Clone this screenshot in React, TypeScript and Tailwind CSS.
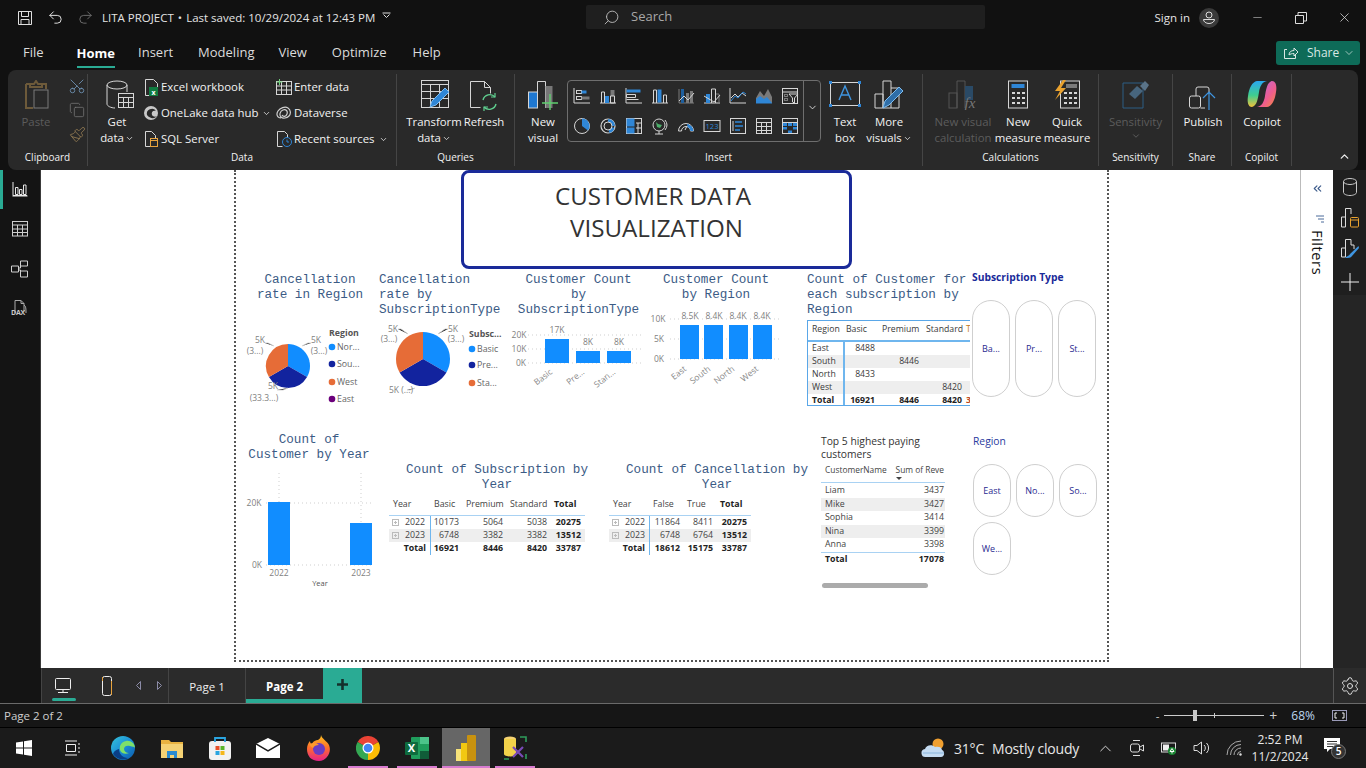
/**
 * Power BI Desktop window with the customer data report open on Page 2.
 */

import React from 'react';
import { ChevronDown, ChevronUp, ChevronsLeft, Copy, Minus, Paintbrush, Redo2, Scissors, Search, Settings, Undo2, X } from 'lucide-react';

const W = '#d6d6d6';
const B = '#2f86d6';
const G = '#7a7a7a';
const BLUE = '#118dff';
const NAVY = '#12239e';
const ORANGE = '#e66c37';

type SvgProps = { w?: number; h?: number; vb?: string; children: React.ReactNode; className?: string };

const S = ({ w = 18, h = 18, vb, children, className }: SvgProps) => (
  <svg width={w} height={h} viewBox={vb ?? `0 0 ${w} ${h}`} fill="none" className={`shrink-0 ${className ?? ''}`}>
    {children}
  </svg>
);

const GALLERY: React.ReactNode[] = [
  <><path d="M1 1v15h16" stroke={W} /><rect x="3.5" y="3.5" width="5" height="3" stroke={W} /><rect x="8.5" y="3.5" width="5" height="3" fill={B} /><rect x="3.5" y="9.5" width="5" height="3" stroke={W} /><rect x="8.5" y="9.5" width="8" height="3" fill={G} /></>,
  <><path d="M1 16h16" stroke={W} /><path d="M2.5 16V5h3v11" stroke={W} /><rect x="6" y="9" width="4" height="7" fill={B} /><rect x="11.5" y="3" width="4" height="6" fill={G} /><path d="M11.5 9h4v7h-4z" stroke={W} /></>,
  <><path d="M1 1v15h16" stroke={W} /><rect x="1.5" y="2.5" width="14" height="3" fill={B} /><path d="M1.5 7.5h9v3h-9zM1.5 12.5h12" stroke={W} /></>,
  <><path d="M1 16h16" stroke={W} /><path d="M2.5 16V3h3v13" stroke={W} /><rect x="6.5" y="2.5" width="4" height="13" fill={B} /><path d="M12.5 16V8h3v8" stroke={W} /></>,
  <><path d="M2 2v14h15" stroke={G} /><rect x="4" y="2" width="3" height="14" fill="#1e5f9e" /><rect x="9" y="6" width="3" height="10" fill={G} /><rect x="13" y="4" width="3" height="12" fill={G} /><path d="M2 14l5-5 4 4 6-7" stroke={W} /></>,
  <><path d="M1 16h16" stroke={W} /><rect x="3" y="7" width="4" height="9" fill={B} /><path d="M8.5 16V2h4v14" stroke={W} /><path d="M13 7h3v9" stroke={G} /><path d="M1 9l5 3 5 3 6-7" stroke={W} /></>,
  <><path d="M1 1v15h16" stroke={W} /><path d="M2 11l4-4 3 3 4-4 4 3" stroke={W} /><path d="M2 14l4-5 3 2 5-6 3 2" stroke={B} /></>,
  <><path d="M1 16h16" stroke={B} /><path d="M1 16V11l4-7 4 5 4-7 4 8v6z" fill={G} /><path d="M1 16v-4l4-3 4 3 3-2 5 6z" fill={B} /></>,
  <><rect x="1.5" y="1.5" width="15" height="15" stroke={W} /><path d="M1.5 5h15" stroke={W} /><rect x="3.5" y="7.5" width="3" height="2" stroke={G} /><rect x="3.5" y="11.5" width="3" height="2" stroke={G} /><path d="M8 7h9l-3.5 4v5l-2-1v-4z" fill="#262626" stroke={W} /></>,
  <><circle cx="9" cy="9" r="7.5" stroke={W} /><path d="M9 9V1.5A7.5 7.5 0 0 1 15 13.5z" fill={B} /></>,
  <><circle cx="9" cy="9" r="7" stroke={W} strokeWidth="1.2" /><path d="M9 2a7 7 0 0 1 7 7h-3a4 4 0 0 0-4-4z" fill={B} /><path d="M15.5 11a7 7 0 0 1-5 5l-1-3a4 4 0 0 0 3-3z" fill={B} /><circle cx="9" cy="9" r="4" stroke={W} /></>,
  <><rect x="1.5" y="1.5" width="15" height="15" stroke={W} /><rect x="1.5" y="1.5" width="8" height="8" fill={B} /><rect x="1.5" y="10.5" width="8" height="6" fill={B} /><path d="M11 6h5M11 11h5M13 6v10" stroke={W} /></>,
  <><circle cx="8" cy="8" r="6" stroke={W} /><path d="M5 5l2 2 4 1-2 3-3-1z" fill="#4caf6a" /><path d="M8 14v3M4 17h8" stroke={W} /><path d="M14 3a8 8 0 0 1 0 10" stroke={W} /></>,
  <><path d="M1.5 14a7.5 7.5 0 0 1 15 0h-3a4.5 4.5 0 0 0-9 0z" stroke={W} /><path d="M10 7a7.5 7.5 0 0 1 6.5 7h-3a4.5 4.5 0 0 0-3-4z" fill={B} /><path d="M8 13l2-4" stroke={W} /></>,
  <><rect x="1" y="3.5" width="16" height="11" stroke={W} /><text x="9" y="12" textAnchor="middle" fontSize="7.5" fill={B}>123</text></>,
  <><rect x="1.5" y="1.5" width="15" height="15" stroke={W} /><path d="M4 4v10" stroke={W} /><path d="M6 5h7M6 9h8M6 13h5" stroke={B} strokeWidth="1.6" /></>,
  <><rect x="1.5" y="1.5" width="15" height="15" stroke={W} /><path d="M1.5 5.5h15M1.5 9.5h15M1.5 13.5h15M6.5 5.5v11M11.5 5.5v11" stroke={W} /></>,
  <><rect x="1.5" y="1.5" width="15" height="15" stroke={W} /><path d="M1.5 5.5h15" stroke={W} /><rect x="2" y="6" width="4" height="3" fill={B} /><rect x="7" y="6" width="4" height="3" fill={B} /><rect x="12" y="6" width="4" height="3" fill={B} /><rect x="2" y="10" width="4" height="2.5" fill={B} /><rect x="7" y="13.5" width="4" height="2.5" fill={B} /><rect x="12" y="10" width="4" height="2.5" fill={B} /></>,
];

const BigBtn = ({ w, icon, lines, dim, chevron }: { w: number; icon: React.ReactNode; lines: string[]; dim?: boolean; chevron?: boolean }) => (
  <div className="flex flex-col items-center" style={{ width: w }}>
    <div className="h-[32px] flex items-start justify-center">{icon}</div>
    <div className={`mt-[2px] text-[11.4px] leading-[16px] text-center whitespace-nowrap ${dim ? 'text-[#5c5c5c]' : 'text-[#f2f2f2]'}`}>
      {lines.map((l, i) => (
        <div key={l} className="flex items-center justify-center gap-px">
          {l}
          {chevron && i === lines.length - 1 && <ChevronDown size={9} strokeWidth={2} />}
        </div>
      ))}
    </div>
  </div>
);

const Group = ({ w, label, children }: { w: number; label: string; children: React.ReactNode }) => (
  <div className="relative flex flex-col border-r border-[#454545] my-[4px] h-[92px]" style={{ width: w }}>
    <div className="flex h-[72px] pt-[6px]">{children}</div>
    <div className="mt-[4px] text-[10px] leading-[14px] text-center text-[#f2f2f2]">{label}</div>
  </div>
);

const SmallBtn = ({ icon, label, chevron }: { icon: React.ReactNode; label: string; chevron?: boolean }) => (
  <div className="h-[26px] flex items-center gap-[2px] text-[11.4px] text-[#f2f2f2] whitespace-nowrap">
    <div className="w-[16px] flex justify-center">{icon}</div>
    {label}
    {chevron && <ChevronDown size={9} strokeWidth={2} className="ml-[2px]" />}
  </div>
);

function TitleBar() {
  return (
    <div className="h-[35px] flex items-center text-[11.5px] text-[#e4e4e4] relative">
      <S w={16} h={16} className="ml-[17px]"><path d="M1.5 1.5h13v13h-13zM4.5 1.5v5h7v-5M4 14.5v-5h8v5" stroke="#e0e0e0" /></S>
      <Undo2 size={17} color="#e0e0e0" strokeWidth={1.4} className="ml-[14px]" />
      <Redo2 size={17} color="#6a6a6a" strokeWidth={1.4} className="ml-[13px]" />
      <span className="ml-[8px]">LITA PROJECT</span>
      <span className="ml-[4px] mr-[4px]">•</span>
      <span>Last saved: 10/29/2024 at 12:43 PM</span>
      <S w={9} h={7} className="ml-[7px] mb-[4px]"><path d="M.5 1h8M1.5 2.5l3 3 3-3" stroke="#ddd" /></S>
      <div className="absolute left-[586px] top-[5px] w-[399px] h-[24px] bg-[#1f1f1f] rounded-[2px] flex items-center text-[#a8a8a8] text-[13px]">
        <Search size={17} strokeWidth={1.3} color="#bbb" className="ml-[17px] -scale-x-100" />
        <span className="ml-[11px]">Search</span>
      </div>
      <div className="ml-auto flex items-center">
        <span className="text-[11.5px] mr-[9px]">Sign in</span>
        <S w={20} h={20} className="mr-[32px]"><circle cx="10" cy="10" r="10" fill="#3a3a3a" /><circle cx="10" cy="7" r="3" stroke="#ddd" /><path d="M4.5 11.5h11a5.5 4 0 0 1-11 0z" stroke="#ddd" /></S>
        <Minus size={13} color="#ddd" strokeWidth={1} className="mr-[31px]" />
        <S w={12} h={12} className="mr-[30px]"><path d="M.5 3.5h8v8h-8zM3 3V.5h8.5V9H9" stroke="#ddd" /></S>
        <X size={15} color="#ddd" strokeWidth={1.2} className="mr-[14px]" />
      </div>
    </div>
  );
}

function MenuBar() {
  const items: [string, string][] = [['Insert', 'ml-[23px]'], ['Modeling', 'ml-[25px]'], ['View', 'ml-[24px]'], ['Optimize', 'ml-[25px]'], ['Help', 'ml-[26px]']];
  return (
    <div className="h-[35px] flex items-center text-[13px] text-[#dcdcdc]">
      <span className="ml-[23px]">File</span>
      <span className="ml-[33px] font-bold text-white relative leading-[20px]">
        Home
        <span className="absolute left-0 right-0 -bottom-[5px] h-[2px] bg-[#2aab94]" />
      </span>
      {items.map(([t, c]) => <span key={t} className={c}>{t}</span>)}
      <div className="ml-auto mr-[6px] w-[84px] h-[24px] rounded-[3px] bg-[#0e6b58] flex items-center text-[12px] text-[#d8e8e4]">
        <S w={16} h={14} className="ml-[7px]"><path d="M4 3.5H1.5v9h11V9M6 9c0-3 2-4.500 5-4.500V2l4 4-4 4V7.500c-2 0-4 .5-5 1.500z" stroke="#d8e8e4" /></S>
        <span className="ml-[8px]">Share</span>
        <ChevronDown size={12} strokeWidth={1.4} className="ml-[4px]" />
      </div>
    </div>
  );
}

function Ribbon() {
  return (
    <div className="h-[100px] mx-[8px] bg-[#292929] rounded-[8px] flex">
      <Group w={80} label="Clipboard">
        <div className="ml-[6px]">
          <BigBtn w={44} dim lines={['Paste']} icon={
            <S w={30} h={32}><path d="M9 4h4l2-3 2 3h4v3H9zM5 4h5M21 4h4v5M5 4v24h7" stroke="#6d5a3a" strokeWidth="2" /><rect x="13" y="10" width="14" height="18" stroke={G} /></S>
          } />
        </div>
        <div className="ml-[10px] flex flex-col items-center -mt-[6px]">
          <div className="h-[26px] flex items-center"><Scissors size={18} color="#6d8fb0" strokeWidth={1.2} className="-rotate-90" /></div>
          <div className="h-[26px] flex items-center"><Copy size={16} color={G} strokeWidth={1.1} /></div>
          <div className="h-[26px] flex items-center"><Paintbrush size={17} color="#8a7550" strokeWidth={1.3} /></div>
        </div>
      </Group>
      <Group w={309} label="Data">
        <div className="ml-[3px]">
          <BigBtn w={52} chevron lines={['Get', 'data']} icon={
            <S className="ml-[5px]" w={28} h={32}><ellipse cx="11" cy="5" rx="10" ry="4" stroke={W} /><path d="M1 5v19c0 2 4 4 8 4M21 5v7" stroke={W} /><rect x="12.500" y="13.500" width="15" height="14" fill="#292929" stroke={W} /><path d="M12.500 17.500h15M12.500 22.500h15M17.500 17.500v10M22.500 17.500v10" stroke={W} /></S>
          } />
        </div>
        <div className="-mt-[6px] w-[130px]">
          <SmallBtn label="Excel workbook" icon={<S w={15} h={17}><path d="M1.500.500h8l4 4v12h-12z" stroke={W} /><rect x="5" y="8" width="9" height="9" fill="#107c41" /><text x="9.500" y="15.500" textAnchor="middle" fontSize="7" fontWeight="700" fill="#fff">x</text></S>} />
          <SmallBtn label="OneLake data hub" chevron icon={<S w={16} h={16}><circle cx="8" cy="8" r="7" fill="#c8c8c8" /><path d="M4 10a5 5 0 0 1 9-4c-3-1-5 1-4 4 1 2 4 2 5 1-2 3-7 3-10-1z" fill="#292929" /></S>} />
          <SmallBtn label="SQL Server" icon={<S w={14} h={16}><path d="M1.500.500h6l4 4v11h-10z" stroke={W} /><rect x="6.500" y="7.500" width="7" height="8" fill="#292929" stroke="#e8a33d" /><path d="M6.500 9.500h7" stroke="#e8a33d" /></S>} />
        </div>
        <div className="-mt-[6px] ml-[3px]">
          <SmallBtn label="Enter data" icon={<S w={16} h={16}><rect x=".5" y="2.500" width="15" height="13" stroke={W} /><path d="M.5 7h15M.5 11h15M5.500 2.500v13M10.500 2.500v13" stroke={W} /><path d="M3.500 0v6M.5 3h6" stroke="#6fcf7b" /></S>} />
          <SmallBtn label="Dataverse" icon={<S w={16} h={14}><path d="M5 12C1 12 0 8 2 5s7-5 10-3 3 6 1 8-6 3-8 1-1-6 2-7 5 1 4 4-4 3-5 1" stroke="#d0d0d0" strokeWidth="1.2" /></S>} />
          <SmallBtn label="Recent sources" chevron icon={<S w={16} h={16}><path d="M1.500.500h7l3 3v3M1.500.500v15h5" stroke={W} /><circle cx="11" cy="11" r="4.500" stroke={B} /><path d="M11 8.500V11h2" stroke={B} /></S>} />
        </div>
      </Group>
      <Group w={118} label="Queries">
        <div className="ml-[10px]">
          <BigBtn w={54} chevron lines={['Transform', 'data']} icon={
            <S w={32} h={30}><rect x="3.500" y=".5" width="27" height="27" stroke={W} /><path d="M3.500 4.500h27M3.500 11.500h27M3.500 18.500h27M12.500 4.500v23M21.500 4.500v23" stroke={W} /><path d="M12 27l2-6L27 8l4 4-13 13z" fill="#2f86d6" stroke="#7fbdf0" /></S>
          } />
        </div>
        <BigBtn w={46} lines={['Refresh']} icon={
          <S w={30} h={32}><path d="M1.500 1.500h14l6 6v6M1.500 1.500v26h10" stroke={W} /><path d="M15.500 1.500v6h6" stroke={W} /><path d="M14 20a7 7 0 0 1 12-3M27 24a7 7 0 0 1-12 3" stroke="#5fcf8f" strokeWidth="1.4" /><path d="M26 13v4h-4M15 31v-4h4" stroke="#5fcf8f" strokeWidth="1.2" /></S>
        } />
      </Group>
      <Group w={408} label="Insert">
        <div className="ml-[6px]">
          <BigBtn w={44} lines={['New', 'visual']} icon={
            <S w={30} h={30}><rect x=".5" y="12" width="9" height="16" fill="#1f78d1" stroke={W} /><path d="M9.500 28V1.500h8V28" stroke={W} /><rect x="17.500" y="6" width="7" height="22" fill="#777" /><path d="M22 14v16M14 23h16" stroke="#5fcf6f" strokeWidth="1.4" /></S>
          } />
        </div>
        <div className="ml-[2px] w-[254px] h-[62px] border border-[#6e6e6e] rounded-[4px] flex">
          <div className="w-[235px] pl-[1px] grid grid-cols-9">
            {GALLERY.map((g, i) => (
              <div key={i} className="h-[30px] flex items-center justify-center"><S>{g}</S></div>
            ))}
          </div>
          <div className="flex-1 border-l border-[#6e6e6e] flex items-center justify-center pb-[8px]">
            <ChevronDown size={11} color="#ddd" strokeWidth={2} />
          </div>
        </div>
        <div className="ml-[4px]">
          <BigBtn w={40} lines={['Text', 'box']} icon={
            <S w={32} h={28}><rect x="1.500" y="2.500" width="29" height="23" stroke={W} /><rect y="1" width="3" height="3" fill={B} /><rect x="29" y="1" width="3" height="3" fill={B} /><rect y="24" width="3" height="3" fill={B} /><rect x="29" y="24" width="3" height="3" fill={B} /><path d="M10 20l6-14 6 14M12 15h8" stroke="#3f95e0" strokeWidth="1.4" /></S>
          } />
        </div>
        <BigBtn w={48} chevron lines={['More', 'visuals']} icon={
          <S w={30} h={30}><path d="M1 14h8v14H1zM9 1h8v27H9zM17 8h8v20h-8" stroke={W} /><path d="M9 28l2-7L25 7l4 4-14 14z" fill="#2f6ea8" stroke="#7fbdf0" /></S>
        } />
      </Group>
      <Group w={176} label="Calculations">
        <div className="ml-[10px]">
          <BigBtn w={60} dim lines={['New visual', 'calculation']} icon={
            <S w={30} h={30}><rect x="1" y="13" width="8" height="15" stroke="#555" /><path d="M9 28V1h8v27" stroke="#555" /><rect x="17" y="6" width="8" height="14" fill="#2a4a66" /><text x="22" y="28" textAnchor="middle" fontSize="15" fontStyle="italic" fontFamily="Liberation Serif, serif" fill="#777">fx</text></S>
          } />
        </div>
        <BigBtn w={50} lines={['New', 'measure']} icon={
          <S w={20} h={30}><rect x=".5" y="1" width="19" height="27" stroke={W} /><rect x="3.500" y="4" width="13" height="4" fill={B} /><path d="M4 12h3v2H4zM9 12h3v2H9zM14 12h3v2h-3zM4 17h3v2H4zM9 17h3v2H9zM14 17h3v2h-3zM4 22h3v2H4zM9 22h3v2H9zM14 22h3v2h-3z" fill={W} /></S>
        } />
        <BigBtn w={48} lines={['Quick', 'measure']} icon={
          <S w={26} h={30}><rect x="6.500" y="1" width="19" height="27" stroke={W} /><rect x="12" y="4" width="11" height="4" fill={G} /><path d="M10 12h3v2h-3zM15 12h3v2h-3zM20 12h3v2h-3zM10 17h3v2h-3zM15 17h3v2h-3zM20 17h3v2h-3zM10 22h3v2h-3zM15 22h3v2h-3zM20 22h3v2h-3z" fill={W} /><path d="M9 0L1 11h5l-5 9 11-12H7l5-8z" fill="#eaa22e" /></S>
        } />
      </Group>
      <Group w={74} label="Sensitivity">
        <div className="w-full">
          <BigBtn w={73} dim lines={['Sensitivity']} icon={
            <S w={28} h={30}><path d="M1 3h20v25H1z" stroke="#2c5f85" /><path d="M7 14l8-8 6 5-8 8z" fill="#47657d" /><path d="M18 6l5-5 4 4-4 6z" fill="#5a7388" /></S>
          } />
          <div className="flex justify-center mt-[1px]"><ChevronDown size={10} color="#666" strokeWidth={2} /></div>
        </div>
      </Group>
      <Group w={59} label="Share">
        <div className="ml-px">
          <BigBtn w={58} lines={['Publish']} icon={
            <S w={28} h={30}><rect x=".5" y="16" width="11" height="12" rx="2" stroke={W} /><path d="M7 16v-7a2 2 0 0 1 2-2h9a2 2 0 0 1 2 2v3" stroke={W} /><path d="M11.500 28H16" stroke={W} /><path d="M20 30V12M14 18l6-6 6 6" stroke="#3f95e0" strokeWidth="1.2" /></S>
          } />
        </div>
      </Group>
      <Group w={60} label="Copilot">
        <div className="ml-px">
          <BigBtn w={58} lines={['Copilot']} icon={
            <S w={30} h={28}>
              <defs>
                <linearGradient id="cpA" x1="0" y1="0" x2="0" y2="1"><stop offset="0" stopColor="#2aa7f0" /><stop offset=".55" stopColor="#3fce8f" /><stop offset="1" stopColor="#f2c13a" /></linearGradient>
                <linearGradient id="cpB" x1="0" y1="0" x2="1" y2="1"><stop offset="0" stopColor="#b06ce8" /><stop offset=".6" stopColor="#ee5c8f" /><stop offset="1" stopColor="#f58a3c" /></linearGradient>
              </defs>
              <path d="M10 1h10c-5 1-7 5-8 11-1 6-2 14-7 15C1 27 0 22 1 16 2 8 5 2 10 1z" fill="url(#cpA)" />
              <path d="M20 27H10c5-1 7-5 8-11 1-6 2-14 7-15 4 0 5 5 4 11-1 8-4 14-9 15z" fill="url(#cpB)" />
            </S>
          } />
        </div>
      </Group>
      <div className="flex-1 flex items-end justify-end pr-[7px] pb-[7px]">
        <ChevronUp size={13} color="#eee" strokeWidth={2.4} />
      </div>
    </div>
  );
}

function LeftRail() {
  return (
    <div className="w-[41px] bg-[#141414] border-r border-[#3a3a3a] flex flex-col items-center relative">
      <div className="absolute left-0 top-0 w-[3px] h-[39px] bg-[#2aab94]" />
      <S className="mt-[11px]" w={16} h={16}><path d="M1 1v13.500h14M.5 15h15" stroke="#e8e8e8" /><path d="M3.500 6.500h2.500v7H3.500zM7.500 8.500h2.500v5H7.500zM11.500 4h2.500v9.500h-2.500z" stroke="#e8e8e8" /></S>
      <S className="mt-[24px]" w={16} h={16}><rect x=".5" y=".5" width="15" height="14.500" stroke="#cfcfcf" /><path d="M.5 4h15M.5 8h15M.5 11.500h15M5.500 4v11M10.500 4v11" stroke="#cfcfcf" /></S>
      <S className="mt-[23px]" w={18} h={18}><path d="M9.500 1h7v5h-7zM.5 6h7v6h-7zM9.500 11h7v6h-7zM7.500 8h2v-4M7.500 10h2v3" stroke="#cfcfcf" /></S>
      <div className="mt-[21px] relative w-[18px] h-[20px]">
        <S w={18} h={18}><path d="M4 14V1.500h6l3 3v8M13 6c2 1 2 4 2 8M10 1.500v3h3" stroke="#aaa" /></S>
        <span className="absolute left-0 top-[10px] text-[7px] font-bold leading-[8px] tracking-[-0.3px] text-[#c8c8c8]">DAX</span>
      </div>
    </div>
  );
}

const VisTitle = ({ lines, left, className }: { lines: string[]; left?: boolean; className?: string }) => (
  <div className={`font-['Liberation_Mono',monospace] text-[12.65px] leading-[15px] text-[#3b5b85] whitespace-nowrap ${left ? '' : 'text-center'} ${className ?? ''}`}>
    {lines.map(l => <div key={l}>{l}</div>)}
  </div>
);

const SvgText = (p: React.SVGProps<SVGTextElement>) => <text fontSize="8.500" fill="#7f7f7f" textAnchor="middle" {...p} />;

const Leader = ({ d }: { d: string }) => <path d={d} stroke="#c8c8c8" strokeWidth=".8" />;

const Slice = ({ cx, cy, r, from, to, fill }: { cx: number; cy: number; r: number; from: number; to: number; fill: string }) => {
  const pt = (a: number) => [cx + r * Math.sin((a * Math.PI) / 180), cy - r * Math.cos((a * Math.PI) / 180)];
  const [x1, y1] = pt(from);
  const [x2, y2] = pt(to);
  return <path d={`M${cx} ${cy}L${x1} ${y1}A${r} ${r} 0 0 1 ${x2} ${y2}Z`} fill={fill} />;
};

const Pie = ({ cx, cy, r }: { cx: number; cy: number; r: number }) => (
  <>
    <Slice cx={cx} cy={cy} r={r} from={0} to={120} fill={BLUE} />
    <Slice cx={cx} cy={cy} r={r} from={120} to={240} fill={NAVY} />
    <Slice cx={cx} cy={cy} r={r} from={240} to={360} fill={ORANGE} />
  </>
);

const Legend = ({ x, title, ys, items }: { x: number; title: [string, number]; ys: number[]; items: [string, string][] }) => (
  <>
    <text x={x - 3} y={title[1] + 3} fontSize="8.800" fontWeight="700" fill="#555">{title[0]}</text>
    {items.map(([t, c], i) => (
      <g key={t}>
        <circle cx={x} cy={ys[i]} r="3.300" fill={c} />
        <text x={x + 5} y={ys[i] + 3} fontSize="8.800" fill="#666">{t}</text>
      </g>
    ))}
  </>
);

const Grid = ({ x1, x2, ys }: { x1: number; x2: number; ys: number[] }) => (
  <>{ys.map(y => <path key={y} d={`M${x1} ${y}H${x2}`} stroke="#cfcfcf" strokeWidth="1" strokeDasharray="1 3" />)}</>
);

const Bar = ({ x, y, w, b }: { x: number; y: number; w: number; b: number }) => <rect x={x} y={y} width={w} height={b - y} fill={BLUE} />;

const RotLabel = ({ x, y, t }: { x: number; y: number; t: string }) => (
  <text x={x} y={y} fontSize="8.500" fill="#8a8a8a" textAnchor="end" transform={`rotate(-38 ${x} ${y})`}>{t}</text>
);

const Pill = ({ t, className }: { t: string; className: string }) => (
  <div className={`w-[38px] rounded-[19px] border border-[#cfcfcf] flex items-center justify-center text-[9px] text-[#2a2a90] ${className}`}>{t}</div>
);

function RegionMatrix() {
  const rows: [string, string, string, string, boolean][] = [
    ['East', '8488', '', '', false],
    ['South', '', '8446', '', true],
    ['North', '8433', '', '', false],
    ['West', '', '', '8420', true],
  ];
  const cols = 'grid grid-cols-[37px_34px_44px_43px_6px]';
  return (
    <div className="mt-[3px] w-[163px] h-[86px] border-y border-l border-[#5aa7e8] overflow-hidden text-[8.700px] text-[#3a3a3a] whitespace-nowrap">
      <div className={`${cols} h-[21px] pb-[2px] items-center border-b-2 border-[#6fb6ee]`}>
        <span className="pl-[4px]">Region</span><span className="pl-[1px]">Basic</span><span className="pl-[3px]">Premium</span><span className="pl-[3px]">Standard</span><span className="text-[#c47a20]">Total</span>
      </div>
      {rows.map(([r, a, b, c, band]) => (
        <div key={r} className={`${cols} h-[13px] items-center ${band ? 'bg-[#eeeeee]' : ''}`}>
          <span className="pl-[4px] h-full border-r-2 border-[#6fb6ee] leading-[13px]">{r}</span>
          <span className="text-right pr-[4px]">{a}</span><span className="text-right pr-[4px]">{b}</span><span className="text-right pr-[4px]">{c}</span><span />
        </div>
      ))}
      <div className={`${cols} h-[13px] items-center font-bold text-[#222]`}>
        <span className="pl-[4px] h-full border-r-2 border-[#6fb6ee] leading-[13px]">Total</span>
        <span className="text-right pr-[4px]">16921</span><span className="text-right pr-[4px]">8446</span><span className="text-right pr-[4px]">8420</span><span className="text-[#c04a20]">33787</span>
      </div>
    </div>
  );
}

const ExpandBox = () => (
  <S w={7} h={7}><rect x=".5" y=".5" width="6" height="6" stroke="#bbb" /><path d="M2 3.500h3M3.500 2v3" stroke="#bbb" /></S>
);

const YearMatrix = ({ widths, head, rows, total, cols }: { widths: number; cols: string; head: string[]; rows: string[][]; total: string[] }) => (
  <div className="mt-[3px] text-[8.800px] text-[#444] whitespace-nowrap" style={{ width: widths }}>
    <div className={`${cols} h-[21px] pb-[1px] items-center border-b border-[#a9d2f3]`}>
      <span className="pl-[4px]">Year</span>
      {head.map((h, i) => <span key={h} className={`pl-[3px] ${i === head.length - 1 ? 'font-bold text-[#222]' : ''}`}>{h}</span>)}
    </div>
    {rows.map((r, ri) => (
      <div key={r[0]} className={`${cols} h-[13px] items-center ${ri === 1 ? 'bg-[#eeeeee]' : ''}`}>
        <span className="h-full border-r border-[#6fb6ee] flex items-center pl-[3px] gap-[6px]"><ExpandBox />{r[0]}</span>
        {r.slice(1).map((v, i) => <span key={i} className={`text-right pr-[4px] ${i === r.length - 2 ? 'font-bold text-[#222]' : ''}`}>{v}</span>)}
      </div>
    ))}
    <div className={`${cols} h-[13px] items-center font-bold text-[#222]`}>
      <span className="h-full border-r border-[#6fb6ee] text-right pr-[4px] leading-[13px]">Total</span>
      {total.map((v, i) => <span key={i} className="text-right pr-[4px]">{v}</span>)}
    </div>
  </div>
);

function TopFive() {
  const rows: [string, string][] = [['Liam', '3437'], ['Mike', '3427'], ['Sophia', '3414'], ['Nina', '3399'], ['Anna', '3398']];
  return (
    <div className="w-[124px] pt-[3px] text-[8.800px] text-[#444]">
      <div className="text-[10.300px] leading-[13px] text-[#333] h-[26px]">Top 5 highest paying<br />customers</div>
      <div className="relative h-[22px] flex justify-between pl-[4px] pr-px pt-[2px] border-b border-[#a9d2f3] whitespace-nowrap leading-[14px] text-[8.400px]">
        <span>CustomerName</span><span>Sum of Reve</span>
        <span className="absolute left-[75px] top-[16px] border-x-[3px] border-x-transparent border-t-[3px] border-t-[#444]" />
      </div>
      <div className="mt-[1px]">
        {rows.map(([n, v], i) => (
          <div key={n} className={`h-[13.500px] flex justify-between items-center pl-[4px] pr-px ${i % 2 ? 'bg-[#eeeeee]' : ''}`}><span>{n}</span><span>{v}</span></div>
        ))}
      </div>
      <div className="h-[16px] flex justify-between items-center pl-[4px] pr-px border-t border-[#a9d2f3] font-bold text-[#222]"><span>Total</span><span>17078</span></div>
      <div className="mt-[15px] ml-px w-[106px] h-[5px] rounded-full bg-[#ababab]" />
    </div>
  );
}

function ReportPage() {
  const cols2 = 'grid grid-cols-[42px_32px_44px_44px_34px]';
  const cols3 = 'grid grid-cols-[41px_34px_33px_34px]';
  return (
    <div className="w-[875px] h-[492px] border-x-2 border-b-2 border-dotted border-[#555] text-[#333]">
      <div className="ml-[225px] w-[391px] h-[99px] border-[3px] border-[#1a2a99] rounded-[8px] pb-[15px] flex items-center justify-center text-center text-[24.200px] leading-[32px] text-[#333]">
        <div><div className="pr-[7px]">CUSTOMER DATA</div><div>VISUALIZATION</div></div>
      </div>
      <div className="mt-[3px] h-[160px] flex">
        <div className="w-[141px]">
          <VisTitle lines={['Cancellation', 'rate in Region']} className="h-[45px] pl-[8px] mr-[1px]" />
          <svg className="overflow-visible" width="141" height="90" viewBox="236 317 141 90">
            <Pie cx={288} cy={366} r={22} />
            <Leader d="M274 346l-6-3h-3M302 346l6-3h3M288 388l-5 2h-6" />
            <SvgText x={260} y={343}>5K</SvgText><SvgText x={316} y={343}>5K</SvgText>
            <SvgText x={255} y={354}>(3...)</SvgText><SvgText x={319} y={354}>(3...)</SvgText>
            <SvgText x={273} y={389}>5K</SvgText><SvgText x={264} y={401}>(33.3...)</SvgText>
            <Legend x={332} title={['Region', 333]} ys={[347, 364, 382, 399]} items={[['Nor...', BLUE], ['Sou...', NAVY], ['West', ORANGE], ['East', '#6b007b']]} />
          </svg>
        </div>
        <div className="w-[138px]">
          <VisTitle left lines={['Cancellation', 'rate by', 'SubscriptionType']} className="h-[45px] pl-[2px]" />
          <svg className="overflow-visible" width="138" height="90" viewBox="377 317 138 90">
            <Pie cx={423} cy={359} r={27} />
            <Leader d="M408 334l-7-5h-3M438 334l7-5h3M415 388l-5 2h-3" />
            <SvgText x={393} y={332}>5K</SvgText><SvgText x={453} y={332}>5K</SvgText>
            <SvgText x={389} y={342}>(3...)</SvgText><SvgText x={456} y={342}>(3...)</SvgText>
            <SvgText x={401} y={393}>5K (...)</SvgText>
            <Legend x={472} title={['Subsc...', 334]} ys={[349, 365, 383]} items={[['Basic', BLUE], ['Pre...', NAVY], ['Sta...', ORANGE]]} />
          </svg>
        </div>
        <div className="w-[127px]">
          <VisTitle lines={['Customer Count', 'by', 'SubscriptionType']} className="h-[45px]" />
          <svg className="overflow-visible" width="127" height="90" viewBox="515 317 127 90">
            <Grid x1={528} x2={642} ys={[335, 349, 363]} />
            <Bar x={545} y={339} w={24} b={363} /><Bar x={576} y={351} w={24} b={363} /><Bar x={607} y={351} w={24} b={363} />
            <SvgText x={519} y={338}>20K</SvgText><SvgText x={519} y={352}>10K</SvgText><SvgText x={521} y={366}>0K</SvgText>
            <SvgText x={557} y={333}>17K</SvgText><SvgText x={588} y={345}>8K</SvgText><SvgText x={619} y={345}>8K</SvgText>
            <RotLabel x={553} y={373} t="Basic" /><RotLabel x={585} y={373} t="Pre..." /><RotLabel x={616} y={373} t="Stan..." />
          </svg>
        </div>
        <div className="w-[148px]">
          <VisTitle lines={['Customer Count', 'by Region']} className="h-[45px]" />
          <svg className="overflow-visible" width="148" height="90" viewBox="642 317 148 90">
            <Grid x1={670} x2={781} ys={[319, 339, 359]} />
            <Bar x={680} y={325} w={19} b={359} /><Bar x={704} y={325} w={19} b={359} /><Bar x={729} y={325} w={19} b={359} /><Bar x={753} y={325} w={19} b={359} />
            <SvgText x={658} y={322}>10K</SvgText><SvgText x={659} y={342}>5K</SvgText><SvgText x={659} y={362}>0K</SvgText>
            <SvgText x={690} y={319}>8.5K</SvgText><SvgText x={714} y={319}>8.4K</SvgText><SvgText x={738} y={319}>8.4K</SvgText><SvgText x={762} y={319}>8.4K</SvgText>
            <RotLabel x={687} y={370} t="East" /><RotLabel x={711} y={370} t="South" /><RotLabel x={735} y={370} t="North" /><RotLabel x={759} y={370} t="West" />
          </svg>
        </div>
        <div className="ml-[17px] w-[163px]">
          <VisTitle left lines={['Count of Customer for', 'each subscription by', 'Region']} className="h-[45px]" />
          <RegionMatrix />
        </div>
        <div className="ml-[2px] flex-1">
          <div className="h-[28px] text-[10.300px] leading-[11px] font-bold text-[#1a2a99]">Subscription Type</div>
          <div className="flex gap-[5px]">
            <Pill t="Ba..." className="h-[97px]" /><Pill t="Pr..." className="h-[97px]" /><Pill t="St..." className="h-[97px]" />
          </div>
        </div>
      </div>
      <div className="flex">
        <div className="w-[141px]">
          <VisTitle lines={['Count of', 'Customer by Year']} className="h-[30px] pl-[6px] pr-px" />
          <svg className="overflow-visible" width="141" height="130" viewBox="236 462 141 130">
            <Grid x1={266} x2={372} ys={[503, 565]} />
            <path d="M279 473V565M361 473V565" stroke="#cfcfcf" strokeDasharray="1 3" />
            <Bar x={268} y={502} w={22} b={565} /><Bar x={350} y={523} w={22} b={565} />
            <SvgText x={254} y={506}>20K</SvgText><SvgText x={257} y={568}>0K</SvgText>
            <SvgText x={279} y={576}>2022</SvgText><SvgText x={361} y={576}>2023</SvgText>
            <text x={320} y={586} fontSize="7.500" fill="#555" textAnchor="middle">Year</text>
          </svg>
        </div>
        <div className="ml-[12px] w-[216px] pt-[30px]">
          <VisTitle lines={['Count of Subscription by', 'Year']} className="h-[30px]" />
          <YearMatrix widths={196} cols={cols2} head={['Basic', 'Premium', 'Standard', 'Total']}
            rows={[['2022', '10173', '5064', '5038', '20275'], ['2023', '6748', '3382', '3382', '13512']]}
            total={['16921', '8446', '8420', '33787']} />
        </div>
        <div className="ml-[4px] w-[212px] pt-[30px]">
          <VisTitle lines={['Count of Cancellation by', 'Year']} className="h-[30px] pl-[4px]" />
          <YearMatrix widths={142} cols={cols3} head={['False', 'True', 'Total']}
            rows={[['2022', '11864', '8411', '20275'], ['2023', '6748', '6764', '13512']]}
            total={['18612', '15175', '33787']} />
        </div>
        <TopFive />
        <div className="ml-[28px] pt-[3px]">
          <div className="h-[29px] text-[10.300px] leading-[13px] text-[#2a3a9e]">Region</div>
          <div className="flex gap-[5px]">
            <Pill t="East" className="h-[53px]" /><Pill t="No..." className="h-[53px]" /><Pill t="So..." className="h-[53px]" />
          </div>
          <div className="mt-[5px]"><Pill t="We..." className="h-[53px]" /></div>
        </div>
      </div>
    </div>
  );
}

function RightRail() {
  return (
    <div className="w-[33px] bg-[#1f1f1f] flex flex-col items-center">
      <S className="mt-[8px]" w={14} h={18}><ellipse cx="7" cy="3.500" rx="6.500" ry="3" stroke="#c8c8c8" /><path d="M.5 3.500v11c0 1.500 3 3 6.500 3s6.500-1.500 6.500-3v-11" stroke="#c8c8c8" /></S>
      <S className="mt-[12px]" w={18} h={20}><path d="M.5 9h4v10h-4zM4.500 19V.5h5.500V6" stroke="#ddd" /><rect x="9.500" y="9.500" width="8" height="9.500" rx="1" stroke="#eaa22e" /><path d="M9.500 12h8" stroke="#eaa22e" /></S>
      <S className="mt-[11px]" w={18} h={20}><path d="M.5 9h4v9h-4zM4.500 18V.5h5.500V6M10 6h3v4" stroke="#ddd" /><path d="M17.500 7L9 15c-1 2-3 2-5 4 3 0 6 0 7-2l7-8z" fill="#3f95e0" /></S>
      <S className="mt-[14px]" w={18} h={18}><path d="M9 0v18M0 9h18" stroke="#eee" /></S>
      <div className="mt-[4px] flex-1 w-full bg-[#252525]" />
    </div>
  );
}

function Tabs() {
  return (
    <div className="h-[36px] flex border-b border-[#6a6a6a]">
      <div className="w-[41px] bg-[#141414]" />
      <div className="flex-1 bg-[#2b2b2b] flex">
        <div className="w-[128px] flex items-center border-l border-[#444] border-r shrink-0 relative">
          <S className="ml-[13px]" w={16} h={16}><rect x=".5" y=".5" width="15" height="11" rx="1" stroke="#eee" /><path d="M3 14.500h10M8 12v2" stroke="#eee" /></S>
          <span className="absolute left-[10px] top-[30px] w-[24px] h-[3px] rounded bg-[#2aab94]" />
          <S className="ml-[31px]" w={10} h={20}><rect x=".5" y=".5" width="9" height="19" rx="2" stroke="#eee" /><path d="M.5 5V1M9.500 19V5" stroke="#e8a33d" /></S>
          <S className="ml-[24px]" w={5} h={9}><path d="M4.500.5L.5 4.500l4 4z" stroke="#8c8ca8" /></S>
          <S className="ml-[16px]" w={5} h={9}><path d="M.5.5l4 4-4 4z" stroke="#8c8ca8" /></S>
        </div>
        <div className="w-[77px] border-r border-[#444] flex items-center justify-center text-[11.5px] text-[#eee] pt-[2px]">Page 1</div>
        <div className="w-[77px] border-b-[4px] border-[#2aab94] flex items-center justify-center text-[11.5px] font-bold text-white pt-[6px]">Page 2</div>
        <div className="w-[39px] bg-[#2aab94] flex items-center justify-center pb-[2px]">
          <S w={11} h={11}><path d="M5.500 0v11M0 5.500h11" stroke="#14302b" strokeWidth="2.600" /></S>
        </div>
        <div className="flex-1" />
        <div className="w-[33px] border-l border-[#555] bg-[#2b2b2b] flex items-center justify-center">
          <Settings size={20} color="#ddd" strokeWidth={1.2} />
        </div>
      </div>
    </div>
  );
}

function StatusBar() {
  return (
    <div className="h-[24px] bg-[#161616] border-b border-black flex items-center text-[11.5px] text-[#cfcfcf] relative">
      <span className="ml-[4px]">Page 2 of 2</span>
      <div className="ml-auto flex items-center">
        <span className="mr-[5px]">-</span>
        <div className="relative w-[100px] h-[1px] bg-[#ccc]">
          <span className="absolute left-[29px] -top-[5px] w-[4px] h-[11px] bg-[#c8c8c8]" />
          <span className="absolute left-[50px] -top-[2px] w-px h-[5px] bg-[#ccc]" />
        </div>
        <span className="ml-[5px] text-[14px] leading-[14px]">+</span>
        <span className="ml-[14px] text-[#bcd6f0] text-[12px]">68%</span>
        <S className="ml-[17px] mr-[19px]" w={15} h={11}><rect x=".5" y=".5" width="14" height="10" stroke="#9a9ab8" /><path d="M5 3H3v5h2M10 3h2v5h-2" stroke="#eee" /></S>
      </div>
    </div>
  );
}

const App_ = ({ x, w, children, bg, line }: { x: number; w: number; children: React.ReactNode; bg?: string; line?: boolean }) => (
  <div className="relative h-full flex items-center justify-center shrink-0" style={{ marginLeft: x, width: w, background: bg }}>
    {children}
    {line && <span className="absolute left-0 right-0 bottom-0 h-[2px] bg-[#d77bd0]" />}
  </div>
);

function Taskbar() {
  return (
    <div className="h-[40px] bg-[#1b1b1b] flex items-center text-[#e8e8e8]">
      <App_ x={0} w={48}>
        <S w={16} h={16}><path d="M0 2.500l7-1v6H0zM8 1.300L16 0v7.500H8zM0 8.500h7v6l-7-1zM8 8.500h8V16l-8-1.300z" fill="#fff" /></S>
      </App_>
      <App_ x={0} w={47}>
        <S w={16} h={16}><path d="M1 1h12M1 15h12M2.500 4.500h9v7h-9zM15 3v2M15 7v2M15 11v2" stroke="#eee" /></S>
      </App_>
      <App_ x={4} w={48}>
        <S w={24} h={24}>
          <defs><linearGradient id="edg" x1="0" y1="0" x2="1" y2="1"><stop offset="0" stopColor="#36c5d8" /><stop offset=".5" stopColor="#1b8fd8" /><stop offset="1" stopColor="#0c5aa8" /></linearGradient></defs>
          <circle cx="12" cy="12" r="12" fill="url(#edg)" />
          <path d="M24 12c0-5-5-8-9-7-5 1-7 5-6 9 1 3 5 5 9 3-3 0-5-2-5-4 0-3 3-4 6-3 2 .5 5 1 5 2z" fill="#7de06a" />
          <path d="M8 13c0 5 4 9 9 9-5 3-12 1-15-4 1-3 3-4 6-5z" fill="#0a3f86" />
        </S>
      </App_>
      <App_ x={1} w={48}>
        <S w={22} h={20}><path d="M0 2h8l2 2h12v16H0z" fill="#e9b341" /><rect y="6" width="22" height="14" fill="#f5d274" /><path d="M6 20v-7h10v7h-3v-3H9v3z" fill="#2a8bd0" /></S>
      </App_>
      <App_ x={0} w={48}>
        <S w={22} h={24}><rect y="5" width="22" height="19" rx="3" fill="#f2f2f2" /><path d="M6 6V2h10v4" stroke="#2aa5e0" strokeWidth="1.800" /><rect x="6.500" y="10" width="4" height="4" fill="#e8502a" /><rect x="11.500" y="10" width="4" height="4" fill="#5ab52a" /><rect x="6.500" y="15" width="4" height="4" fill="#2aa5e0" /><rect x="11.500" y="15" width="4" height="4" fill="#f5b81a" /></S>
      </App_>
      <App_ x={0} w={48}>
        <S w={24} h={20}><path d="M0 6l12-6 12 6v14H0z" fill="#fff" /><path d="M0 6l12 7 12-7" stroke="#1b1b1b" strokeWidth="1.500" /></S>
      </App_>
      <App_ x={3} w={48}>
        <S w={24} h={26}>
          <defs><linearGradient id="ffx" x1="0" y1="0" x2="0" y2="1"><stop offset="0" stopColor="#ffc21e" /><stop offset=".5" stopColor="#ff6d2e" /><stop offset="1" stopColor="#e5208a" /></linearGradient></defs>
          <path d="M14 0c1 4 6 6 8 10 3 7-2 16-10 16S0 21 0 14c0-3 1-6 3-8 0 2 1 3 2 3 1-3 4-4 6-4 2-1 3-3 3-5z" fill="url(#ffx)" />
          <circle cx="12" cy="14" r="6" fill="#6b3cc4" />
          <path d="M3 9c3-2 7-1 9 1-3 0-5 1-6 3-2-1-3-2-3-4z" fill="#ff9a2e" />
        </S>
      </App_>
      <App_ x={5} w={40} line>
        <S w={24} h={24}>
          <path d="M12 12L22.400 6A12 12 0 0 0 1.600 6z" fill="#ea4335" />
          <path d="M12 12H24A12 12 0 0 1 12 24z" fill="#fbbc05" />
          <path d="M12 24A12 12 0 0 1 1.600 6L12 12z" fill="#34a853" />
          <path d="M22.400 6A12 12 0 0 1 24 12H12z" fill="#fbbc05" />
          <circle cx="12" cy="12" r="5.500" fill="#fff" /><circle cx="12" cy="12" r="4.300" fill="#4285f4" />
        </S>
      </App_>
      <App_ x={9} w={40} line>
        <S w={24} h={24}><rect x="6" y="1" width="18" height="22" rx="1" fill="#1f9d5c" /><rect x="15" y="1" width="9" height="7" fill="#4cc48a" /><rect x="15" y="15" width="9" height="8" fill="#105c38" /><rect y="6" width="13" height="13" rx="1" fill="#0e6b3e" /><text x="6.500" y="16" textAnchor="middle" fontSize="11" fontWeight="700" fill="#fff">X</text></S>
      </App_>
      <App_ x={5} w={48} bg="#666666" line>
        <S w={20} h={26}><rect x="0" y="14" width="8" height="12" fill="#f6e27a" /><rect x="5" y="8" width="8" height="18" fill="#f2c811" /><rect x="11" y="0" width="9" height="26" rx="1" fill="#c8920f" /></S>
      </App_>
      <App_ x={5} w={40} line>
        <S w={24} h={24}><ellipse cx="7" cy="3" rx="6" ry="2.500" fill="#f5d274" /><path d="M1 3v15c0 1.500 3 2.500 6 2.500s6-1 6-2.500V3z" fill="#f2d24a" /><path d="M17 1h6v5M1 23h5M23 18v5" stroke="#2f9d5c" strokeWidth="1.600" /><path d="M10 11l10 10M20 11L10 21" stroke="#7a4bb8" strokeWidth="2.200" /></S>
      </App_>
      <div className="ml-auto flex items-center h-full">
        <S w={25} h={22} className="mr-[8px]">
          <circle cx="17" cy="7" r="5.500" fill="#f0a030" />
          <path d="M5 20a4 4 0 0 1-1-8c1-4 7-5 10-2 3-1 7 0 7 3 3 1 3 7-1 7z" fill="#c5dcf2" />
          <path d="M2 16h21" stroke="#8ab5dc" />
        </S>
        <span className="text-[14px] tracking-[-0.2px] w-[38px]">31°C</span>
        <span className="text-[14px] tracking-[-0.2px] w-[90px]">Mostly cloudy</span>
        <ChevronUp size={19} strokeWidth={1.2} color="#ddd" className="ml-[14px]" />
        <S className="ml-[15px]" w={14} h={18}><path d="M3 1.500h7M3 16.500h7" stroke="#ddd" /><rect x=".5" y="5" width="9" height="8" rx="2" stroke="#ddd" /><path d="M10 8l3.500-2v6L10 10" stroke="#ddd" /></S>
        <S className="ml-[17px]" w={16} h={14}><rect x=".5" y="2" width="14" height="9" stroke="#ddd" /><rect x="2" y="3.500" width="6" height="6" fill="#eee" /><circle cx="11" cy="10" r="4" fill="#17822f" /><path d="M11 7.500l-2 3h4zM11 10v2.500" stroke="#fff" /></S>
        <S className="ml-[16px]" w={17} h={16}><path d="M1 5.500h3L8.500 2v12L4 10.500H1z" stroke="#ddd" /><path d="M11 5a4 4 0 0 1 0 6M13.500 3a7 7 0 0 1 0 10" stroke="#ddd" /></S>
        <S className="ml-[16px]" w={16} h={16}><path d="M1 15a14 14 0 0 1 14-14M4.500 15A10.500 10.500 0 0 1 15 4.500M8 15a7 7 0 0 1 7-7M11.500 15a3.500 3.500 0 0 1 3.500-3.500" stroke="#aaa" /><circle cx="14.500" cy="14.500" r="1.200" fill="#ddd" /></S>
        <div className="ml-[4px] w-[68px] text-center text-[12px] leading-[17px] text-[#e8e8e8]">2:52 PM<br />11/2/2024</div>
        <div className="relative ml-[10px] mr-[26px] w-[16px] h-[16px] mt-[-4px]">
          <S w={16} h={16}><path d="M0 0h16v11H6l-3 3v-3H0z" fill="#fff" /><path d="M3 3.500h10M3 6h10M3 8.500h6" stroke="#333" /></S>
          <span className="absolute left-[7px] top-[6px] w-[15px] h-[15px] rounded-full bg-[#333] border border-[#777] flex items-center justify-center text-[10px] font-semibold text-white">5</span>
        </div>
      </div>
    </div>
  );
}

export default function App() {
  return (
    <div className="w-[1366px] h-[768px] overflow-hidden bg-[#111111] font-['Open_Sans',sans-serif] flex flex-col">
      <TitleBar />
      <MenuBar />
      <Ribbon />
      <div className="h-[498px] flex">
        <LeftRail />
        <div className="w-[1259px] bg-white pl-[193px] overflow-hidden">
          <ReportPage />
        </div>
        <div className="w-[33px] bg-white border-l border-[#bbb] flex flex-col items-center">
          <ChevronsLeft size={13} color="#3b5a8a" strokeWidth={2} className="mt-[12px]" />
          <S className="mt-[20px] ml-[6px]" w={8} h={9}><path d="M0 1h8M2 4h6M5 7h3" stroke="#4a6a9a" /></S>
          <span className="mt-[6px] [writing-mode:vertical-rl] text-[14.5px] tracking-[0.6px] text-[#111]">Filters</span>
        </div>
        <RightRail />
      </div>
      <Tabs />
      <StatusBar />
      <Taskbar />
    </div>
  );
}
